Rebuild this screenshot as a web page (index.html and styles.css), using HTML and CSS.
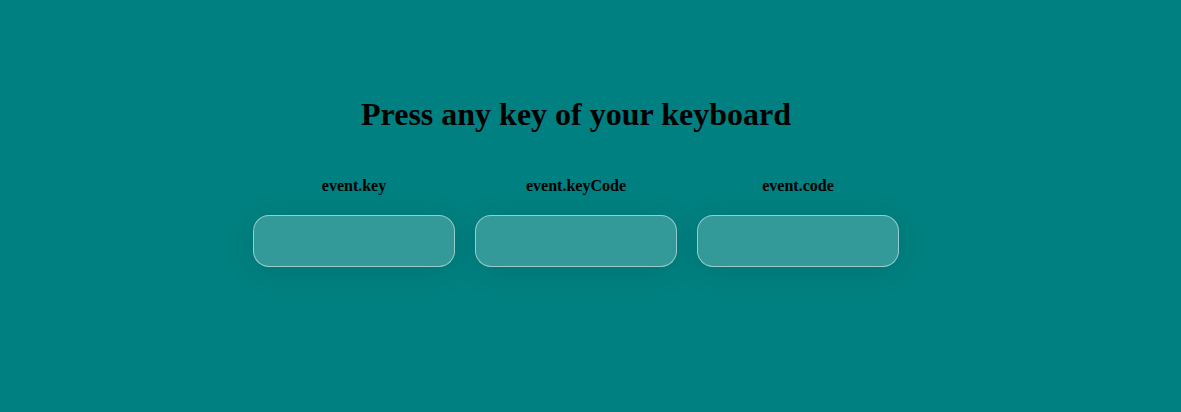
FILE: index.html
```html
<!DOCTYPE html>
<html lang="en">
<head>
<meta charset="utf-8">
<title>Key codes</title>
<link rel="stylesheet" href="styles.css">
</head>
<body>
<main class="page">
  <h1 class="title">Press any key of your keyboard</h1>
  <div class="fields">
    <div class="field">
      <div class="label">event.key</div>
      <div class="box"></div>
    </div>
    <div class="field">
      <div class="label">event.keyCode</div>
      <div class="box"></div>
    </div>
    <div class="field">
      <div class="label">event.code</div>
      <div class="box"></div>
    </div>
  </div>
</main>
</body>
</html>
```

FILE: styles.css
```css
html, body {
  margin: 0;
  height: 100%;
}
body {
  background: #008080;
  font-family: "Liberation Serif", "Times New Roman", serif;
  color: #000;
}
.page {
  display: flex;
  flex-direction: column;
  align-items: center;
  padding: 96px 29px 0 0;
}
.title {
  margin: 0;
  font-size: 32px;
  font-weight: bold;
  line-height: 37px;
}
.fields {
  display: flex;
  gap: 20px;
  margin-top: 44px;
}
.field {
  display: flex;
  flex-direction: column;
  align-items: center;
}
.label {
  font-size: 16px;
  font-weight: bold;
  line-height: 18px;
}
.box {
  margin-top: 20px;
  width: 200px;
  height: 50px;
  border-radius: 16px;
  background: rgba(255, 255, 255, 0.2);
  border: 1px solid rgba(255, 255, 255, 0.5);
  box-shadow: 0 4px 30px rgba(0, 0, 0, 0.1);
}
```
